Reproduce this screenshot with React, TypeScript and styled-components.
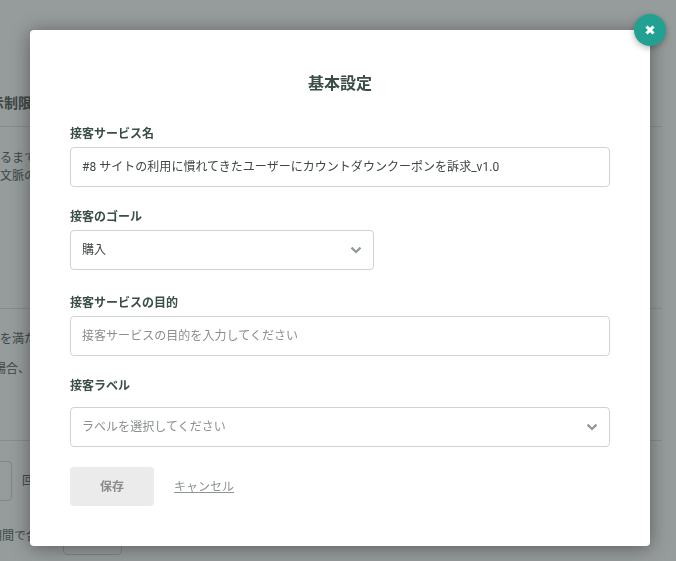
import React from 'react';
import styled, { createGlobalStyle } from 'styled-components';

const GlobalStyle = createGlobalStyle`
  html, body {
    margin: 0;
    padding: 0;
    height: 100%;
    overflow: hidden;
    background: #ffffff;
    font-family: Roboto, "Noto Sans CJK JP", sans-serif;
  }
`;

const Chevron = () => (
  <ChevronIcon viewBox="0 0 12 8">
    <path d="M1.5 1.6 L6 6 L10.5 1.6" fill="none" stroke="#8f9997" strokeWidth="2.2" />
  </ChevronIcon>
);

const App = () => {
  return (
    <>
      <GlobalStyle />
      <BehindPage>
        <BehindSection $height={127} $paddingTop={94}>
          <BehindHeading>表示制限</BehindHeading>
        </BehindSection>
        <BehindSection $height={182} $paddingTop={22}>
          <BehindText $indent={-24}>達するまで</BehindText>
          <BehindText $indent={0}>文脈の</BehindText>
        </BehindSection>
        <BehindSection $height={132} $paddingTop={21}>
          <BehindLooseText $indent={0}>を満たす</BehindLooseText>
          <BehindLooseText $indent={-6}>場合、共</BehindLooseText>
        </BehindSection>
        <BehindCountRow>
          <BehindBox />
          <BehindText $indent={0}>回</BehindText>
        </BehindCountRow>
        <BehindLastRow>
          <BehindText $indent={-22}>の期間で合</BehindText>
          <BehindSmallBox />
        </BehindLastRow>
      </BehindPage>

      <Overlay>
        <Modal>
          <CloseButton aria-label="閉じる">
            <svg width="10" height="10" viewBox="0 0 10 10">
              <path d="M1.5 1.5 L8.5 8.5 M8.5 1.5 L1.5 8.5" stroke="#ffffff" strokeWidth="3" />
            </svg>
          </CloseButton>
          <Title>基本設定</Title>

          <Label>接客サービス名</Label>
          <FieldBox $marginBottom={21}>
            <Value>#8 サイトの利用に慣れてきたユーザーにカウントダウンクーポンを訴求_v1.0</Value>
          </FieldBox>

          <Label>接客のゴール</Label>
          <FieldBox $width={304} $marginBottom={24}>
            <Value>購入</Value>
            <Chevron />
          </FieldBox>

          <Label>接客サービスの目的</Label>
          <FieldBox $marginBottom={21}>
            <Placeholder>接客サービスの目的を入力してください</Placeholder>
          </FieldBox>

          <Label $gap={12}>接客ラベル</Label>
          <FieldBox $marginBottom={20}>
            <Placeholder>ラベルを選択してください</Placeholder>
            <Chevron />
          </FieldBox>

          <Actions>
            <SaveButton>保存</SaveButton>
            <CancelLink>キャンセル</CancelLink>
          </Actions>
        </Modal>
      </Overlay>
    </>
  );
};

const BehindPage = styled.div`
  width: 662px;
  height: 561px;
  overflow: hidden;
  color: #4c5654;
`;

const BehindSection = styled.div<{ $height: number; $paddingTop: number }>`
  box-sizing: border-box;
  height: ${(p) => p.$height}px;
  padding-top: ${(p) => p.$paddingTop}px;
  border-bottom: 1px solid #dfe3e2;
`;

const BehindHeading = styled.div`
  margin-left: -24px;
  font-size: 14px;
  line-height: 18px;
  font-weight: 700;
  white-space: nowrap;
`;

const BehindText = styled.div<{ $indent: number }>`
  margin-left: ${(p) => p.$indent}px;
  font-size: 12px;
  line-height: 18px;
  white-space: nowrap;
`;

const BehindLooseText = styled(BehindText)`
  margin-bottom: 12px;
`;

const BehindCountRow = styled.div`
  display: flex;
  align-items: center;
  gap: 10px;
  margin-top: 20px;
  margin-left: -49px;
`;

const BehindBox = styled.div`
  box-sizing: border-box;
  width: 61px;
  height: 40px;
  border: 1px solid #cfd5d4;
  border-radius: 4px;
`;

const BehindLastRow = styled.div`
  display: flex;
  align-items: flex-start;
  margin-top: 26px;
`;

const BehindSmallBox = styled.div`
  box-sizing: border-box;
  flex: none;
  width: 59px;
  height: 40px;
  margin-top: -12px;
  margin-left: 25px;
  border: 1px solid #cfd5d4;
  border-radius: 4px;
`;

const Overlay = styled.div`
  position: fixed;
  inset: 0;
  box-sizing: border-box;
  padding: 30px 26px 15px 30px;
  background: rgba(45, 56, 55, 0.5);
`;

const Modal = styled.div`
  position: relative;
  box-sizing: border-box;
  width: 620px;
  height: 516px;
  padding: 45px 40px 40px;
  background: #ffffff;
  border-radius: 4px;
  box-shadow: 0 2px 20px rgba(0, 0, 0, 0.4);
`;

const CloseButton = styled.button`
  position: absolute;
  top: -16px;
  right: -16px;
  display: flex;
  align-items: center;
  justify-content: center;
  width: 32px;
  height: 32px;
  padding: 0;
  border: none;
  border-radius: 50%;
  background: #22a193;
  box-shadow: 0 2px 6px rgba(0, 0, 0, 0.3);
`;

const Title = styled.h2`
  margin: 0 0 32px;
  font-size: 16px;
  line-height: 18px;
  font-weight: 700;
  text-align: center;
  color: #3b4d49;
`;

const Label = styled.div<{ $gap?: number }>`
  margin-bottom: ${(p) => p.$gap ?? 4}px;
  font-size: 12px;
  line-height: 18px;
  font-weight: 700;
  color: #3b4d49;
`;

const FieldBox = styled.div<{ $width?: number; $marginBottom: number }>`
  box-sizing: border-box;
  display: flex;
  align-items: center;
  justify-content: space-between;
  width: ${(p) => (p.$width ? `${p.$width}px` : '100%')};
  height: 40px;
  margin-bottom: ${(p) => p.$marginBottom}px;
  padding: 0 11px;
  background: #ffffff;
  border: 1px solid #ced4d3;
  border-radius: 4px;
`;

const Value = styled.span`
  padding-bottom: 3px;
  font-size: 12px;
  letter-spacing: 0.03px;
  color: #3d4644;
  white-space: nowrap;
`;

const Placeholder = styled.span`
  padding-bottom: 3px;
  font-size: 12px;
  letter-spacing: 0.04px;
  color: #8a8f8e;
  white-space: nowrap;
`;

const ChevronIcon = styled.svg`
  width: 12px;
  height: 8px;
  flex: none;
`;

const Actions = styled.div`
  display: flex;
  align-items: center;
  gap: 20px;
`;

const SaveButton = styled.button`
  width: 84px;
  height: 39px;
  padding: 0 0 3px;
  border: none;
  border-radius: 4px;
  background: #ebebeb;
  font-family: inherit;
  font-size: 12px;
  font-weight: 700;
  color: #8b8b8b;
`;

const CancelLink = styled.a`
  margin-bottom: 3px;
  font-size: 12px;
  color: #8d9391;
  text-decoration: underline;
`;

export default App;
